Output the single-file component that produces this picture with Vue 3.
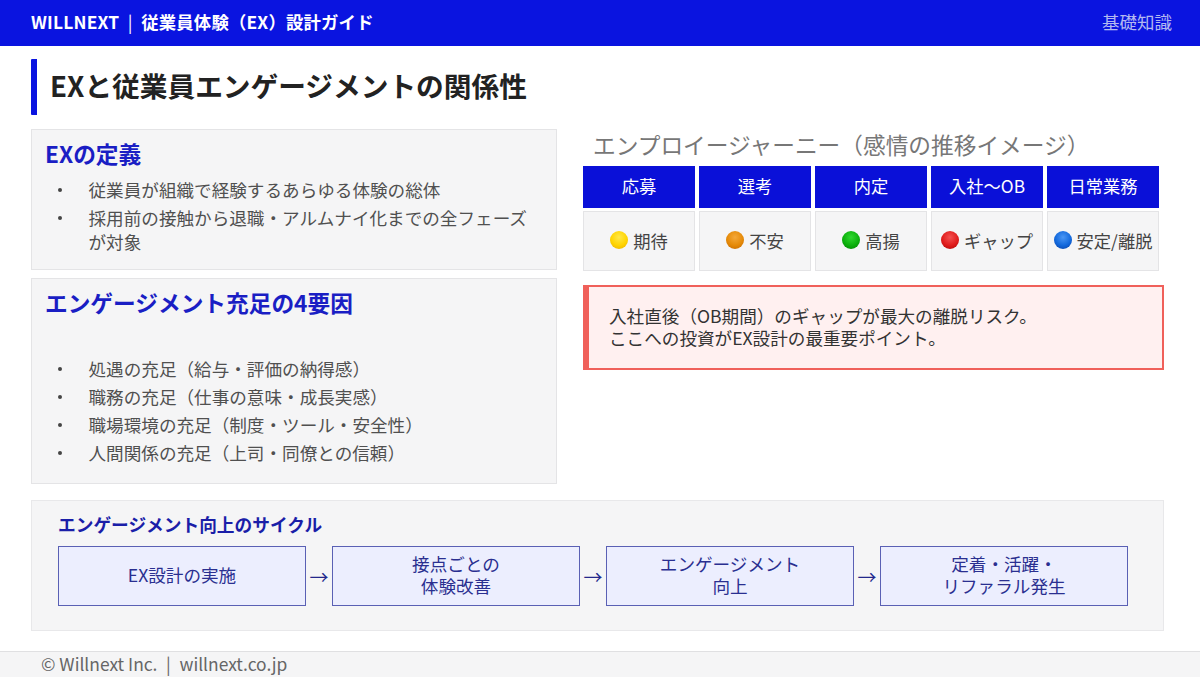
<script setup>
const def = ['従業員が組織で経験するあらゆる体験の総体', '採用前の接触から退職・アルムナイ化までの全フェーズが対象']
const factors = ['処遇の充足（給与・評価の納得感）', '職務の充足（仕事の意味・成長実感）', '職場環境の充足（制度・ツール・安全性）', '人間関係の充足（上司・同僚との信頼）']
const stages = [
  { head: '応募', label: '期待', color: 'yellow' },
  { head: '選考', label: '不安', color: 'orange' },
  { head: '内定', label: '高揚', color: 'green' },
  { head: '入社〜OB', label: 'ギャップ', color: 'red' },
  { head: '日常業務', label: '安定/離脱', color: 'blue' },
]
const cycle = [['EX設計の実施'], ['接点ごとの', '体験改善'], ['エンゲージメント', '向上'], ['定着・活躍・', 'リファラル発生']]
</script>

<template>
  <div class="page">
    <header class="top">
      <span class="brand">WILLNEXT<span class="sep">|</span>従業員体験（EX）設計ガイド</span>
      <span class="tag">基礎知識</span>
    </header>
    <main class="main">
      <h1 class="title">EXと従業員エンゲージメントの関係性</h1>
      <div class="columns">
        <div class="left">
          <section class="card card-def">
            <h2>EXの定義</h2>
            <ul>
              <li v-for="t in def" :key="t"><span>{{ t }}</span></li>
            </ul>
          </section>
          <section class="card card-factors">
            <h2>エンゲージメント充足の4要因</h2>
            <ul>
              <li v-for="t in factors" :key="t"><span>{{ t }}</span></li>
            </ul>
          </section>
        </div>
        <div class="right">
          <h3 class="journey-title">エンプロイージャーニー（感情の推移イメージ）</h3>
          <div class="journey">
            <div v-for="s in stages" :key="s.head" class="head">{{ s.head }}</div>
            <div v-for="s in stages" :key="s.label" class="cell">
              <span class="dot" :class="s.color"></span>
              <span>{{ s.label }}</span>
            </div>
          </div>
          <div class="alert">
            入社直後（OB期間）のギャップが最大の離脱リスク。<br />ここへの投資がEX設計の最重要ポイント。
          </div>
        </div>
      </div>
      <section class="cycle">
        <h3>エンゲージメント向上のサイクル</h3>
        <div class="flow">
          <template v-for="(c, i) in cycle" :key="i">
            <span v-if="i" class="arrow">→</span>
            <div class="step">
              <span v-for="line in c" :key="line">{{ line }}</span>
            </div>
          </template>
        </div>
      </section>
    </main>
    <footer class="foot">© Willnext Inc.<span class="sep">|</span>willnext.co.jp</footer>
  </div>
</template>

<style>
html, body { margin: 0; background: #fff; }
</style>

<style scoped>
.page {
  width: 1200px;
  height: 677px;
  display: flex;
  flex-direction: column;
  overflow: hidden;
  background: #fff;
  font-family: "Noto Sans CJK JP", "Noto Sans", sans-serif;
  color: #444;
}
.top {
  height: 46px;
  flex: none;
  box-sizing: border-box;
  padding: 0 28px 3px 31px;
  display: flex;
  align-items: center;
  justify-content: space-between;
  background: #0a14e0;
  color: #fff;
}
.brand { font-size: 17.35px; font-weight: 700; letter-spacing: 0.2px; }
.sep {
  display: inline-block;
  width: 22px;
  text-align: center;
  font-weight: 400;
}
.tag { font-size: 17.5px; color: #b3b8f0; }
.main {
  flex: 1;
  padding: 13px 36px 0 31px;
  display: flex;
  flex-direction: column;
}
.title {
  margin: 0;
  height: 56px;
  box-sizing: border-box;
  border-left: 6px solid #0a14e0;
  border-radius: 1px;
  padding: 0 0 4px 13px;
  display: flex;
  align-items: center;
  font-size: 27.7px;
  font-weight: 700;
  color: #222;
}
.columns {
  display: grid;
  grid-template-columns: 526px 581px;
  column-gap: 26px;
  margin-top: 14px;
}
.left { display: flex; flex-direction: column; gap: 8px; }
.card {
  box-sizing: border-box;
  background: #f5f5f6;
  border: 1px solid #e4e4e6;
  padding: 9px 13px;
}
.card-def { height: 141px; }
.card-factors { height: 206px; }
.card h2 {
  margin: 0;
  font-size: 22.7px;
  line-height: 30px;
  font-weight: 700;
  color: #1a1ec4;
}
.card ul {
  margin: 0;
  padding: 0 12px 0 10px;
  list-style: none;
  font-size: 17.6px;
  line-height: 24px;
  color: #505050;
}
.card li {
  display: flex;
  margin-bottom: 4px;
}
.card li::before {
  content: "";
  flex: none;
  width: 4px;
  height: 4px;
  margin: 10px 27px 0 2.5px;
  border-radius: 50%;
  background: #444;
}
.card-def ul { margin-top: 9px; }
.card-factors ul { margin-top: 39px; }
.right { display: flex; flex-direction: column; }
.journey-title {
  margin: 0;
  padding-left: 10px;
  height: 37px;
  font-size: 22.7px;
  line-height: 32px;
  font-weight: 400;
  color: #777;
  white-space: nowrap;
}
.journey {
  width: 576px;
  display: grid;
  grid-template-columns: repeat(5, 112px);
  grid-template-rows: 42px 60px;
  column-gap: 4px;
  row-gap: 3px;
}
.head {
  display: flex;
  align-items: center;
  justify-content: center;
  padding-bottom: 3px;
  box-sizing: border-box;
  background: #0a10d8;
  color: #fff;
  font-size: 17.3px;
}
.cell {
  box-sizing: border-box;
  display: flex;
  align-items: center;
  justify-content: center;
  gap: 5px;
  padding-bottom: 2px;
  white-space: nowrap;
  background: #f5f5f6;
  border: 1px solid #e4e4e6;
  font-size: 17.3px;
  color: #444;
}
.dot {
  flex: none;
  width: 18px;
  height: 18px;
  border-radius: 50%;
}
.yellow { background: radial-gradient(circle at 50% 35%, #ffe84a 0%, #ffd400 55%, #e8ac00 100%); }
.orange { background: radial-gradient(circle at 50% 35%, #f4a83a 0%, #e58a08 55%, #c06400 100%); }
.green { background: radial-gradient(circle at 50% 35%, #30d830 0%, #0cb00c 55%, #007c00 100%); }
.red { background: radial-gradient(circle at 50% 35%, #f45050 0%, #e01c1c 55%, #a80404 100%); }
.blue { background: radial-gradient(circle at 50% 35%, #4a96f4 0%, #1268dc 55%, #083c9c 100%); }
.alert {
  box-sizing: border-box;
  height: 85px;
  margin-top: 14px;
  padding: 18px 20px;
  background: #fff0f0;
  border: 2px solid #f0605a;
  border-left-width: 6px;
  font-size: 17.6px;
  line-height: 22px;
  color: #333;
}
.cycle {
  box-sizing: border-box;
  height: 131px;
  margin-top: 16px;
  padding: 11px 26px;
  background: #f5f5f6;
  border: 1px solid #e8e8ea;
}
.cycle h3 {
  margin: 0 0 9px;
  font-size: 17.7px;
  line-height: 25px;
  font-weight: 700;
  color: #1a1ea8;
}
.flow { display: flex; align-items: center; }
.step {
  box-sizing: border-box;
  width: 248px;
  height: 60px;
  flex: none;
  display: flex;
  flex-direction: column;
  align-items: center;
  justify-content: center;
  padding-bottom: 2px;
  background: #eceefe;
  border: 1.5px solid #5a60b4;
  font-size: 17.6px;
  line-height: 22px;
  color: #2a2f90;
}
.arrow {
  width: 26px;
  flex: none;
  text-align: center;
  font-size: 19px;
  color: #23288c;
}
.foot {
  height: 26px;
  flex: none;
  margin-top: -1px;
  box-sizing: border-box;
  padding: 0 0 3px 41px;
  display: flex;
  align-items: center;
  background: #f5f5f6;
  border-top: 1px solid #e0e0e2;
  font-size: 17.4px;
  color: #666;
}
</style>
